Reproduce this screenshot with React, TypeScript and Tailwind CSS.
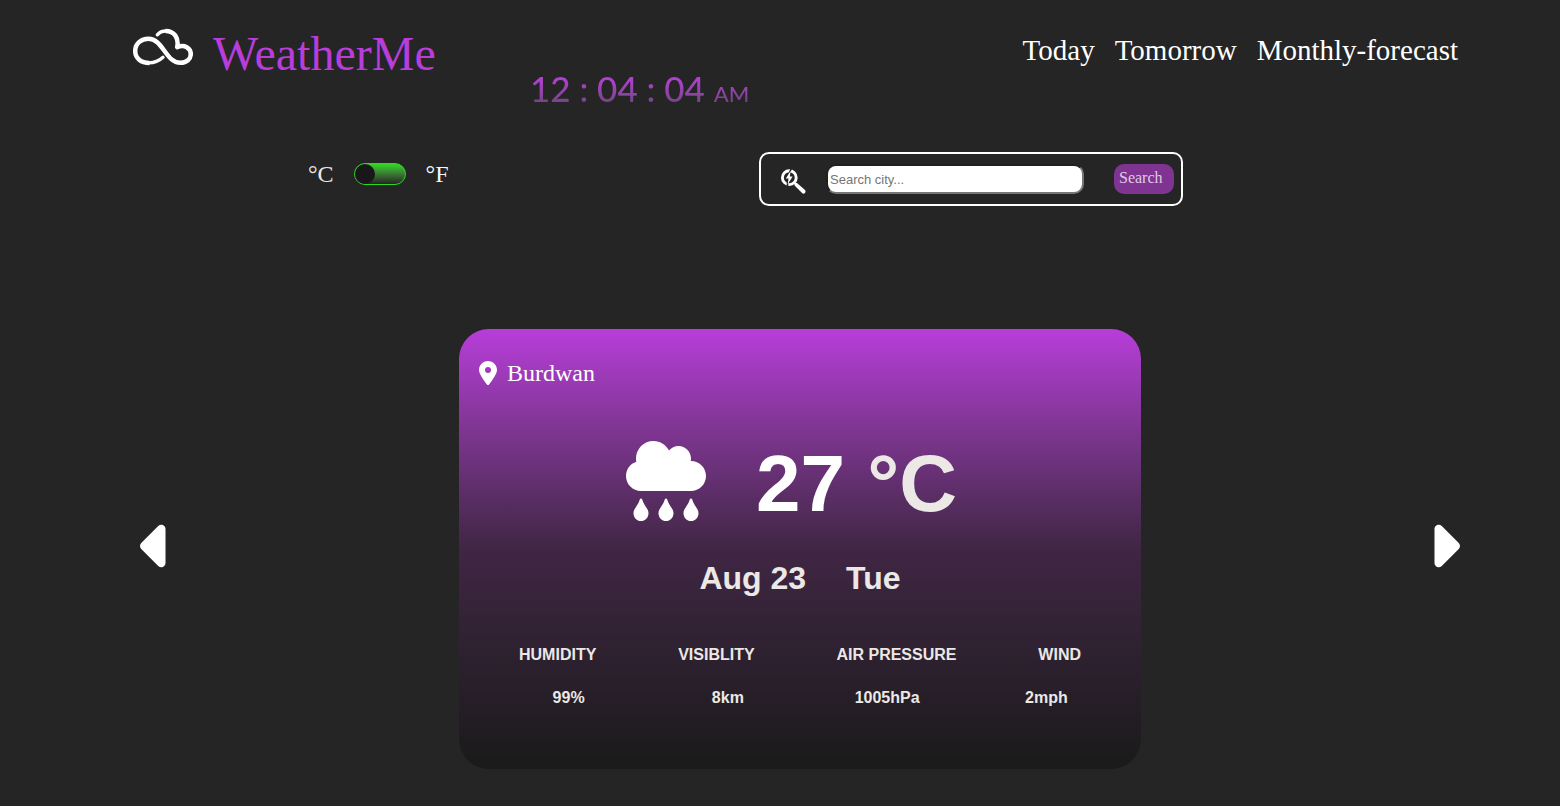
import React from "react";
import { FaCaretLeft, FaCaretRight, FaLocationDot } from "react-icons/fa6";
import { FaCloudRain } from "react-icons/fa";

const stats = [
  { label: "HUMIDITY", value: "99%" },
  { label: "VISIBLITY", value: "8km" },
  { label: "AIR PRESSURE", value: "1005hPa" },
  { label: "WIND", value: "2mph" },
];

function Logo() {
  return (
    <svg viewBox="0 0 60 38" className="h-[38px] w-[60px]" fill="none" stroke="#fff" strokeLinejoin="round" aria-hidden="true">
      <path strokeWidth="3.4" strokeLinecap="round" d="M30 29.300C25.500 33.500 20.500 34.900 16 34.900M24.300 6.800C26.500 4.200 29.500 3 33 3" />
      <path strokeWidth="4.500" d="M16.500 34.900C8 34.900 2.200 30.200 2.200 23C2.200 15.600 8 10.800 15.500 10.800C22.500 10.800 26.500 16 31 22.300C36 29.300 40 34.800 47.500 34.800C53.700 34.800 57.800 31 57.800 26C57.800 20 51.500 16.200 44.200 19.200C46 10 41.500 3 32.500 3" />
    </svg>
  );
}

function BoltSearchIcon() {
  return (
    <svg viewBox="0 0 26 26" className="size-[26px]" fill="none" aria-hidden="true">
      <circle cx="9.300" cy="9.700" r="6.900" stroke="#fff" strokeWidth="2.900" />
      <path d="M11.500 0 9 6M7.600 13 7.400 20" stroke="#252525" strokeWidth="1.600" />
      <path d="M10.700 2.800 5.800 10.600H8.600L7.600 16.600 12.600 8.600H9.800Z" fill="#fff" />
      <path d="M13.800 14.400 17 14.900 25 22C26.600 23.800 24.300 26.800 22.300 25.300L14.800 17.800Z" fill="#fff" />
    </svg>
  );
}

export default function App() {
  return (
    <div className="min-h-screen bg-[#252525] font-['Liberation_Serif',serif] text-white">
      <header className="flex items-start pr-[102px] pl-[133px]">
        <a href="#home" className="flex w-[397px] items-start">
          <span className="pt-7"><Logo /></span>
          <span className="pt-[26px] pl-5 text-5xl leading-[56px] text-[#b83dda]">WeatherMe</span>
        </a>
        <p className="mt-16 bg-linear-to-b from-[#b83dda] from-25% to-[#704580] to-85% bg-clip-text font-['Lato',sans-serif] text-[35px] leading-[48px] font-medium text-transparent">
          12 : 04 : 04 <span className="text-[22px] leading-none">AM</span>
        </p>
        <nav className="ml-auto flex gap-5 pt-[32px] text-[29px] leading-9">
          <a href="#today">Today</a>
          <a href="#tomorrow">Tomorrow</a>
          <a href="#monthly">Monthly-forecast</a>
        </nav>
      </header>

      <section className="mt-10 flex items-start justify-between pr-[377px] pl-[308px]">
        <div className="flex items-center gap-5 pt-2 text-2xl leading-7">
          <label htmlFor="unit" className="text-[#ebe8e6]">°C</label>
          <input
            id="unit"
            type="checkbox"
            role="switch"
            aria-label="Use Fahrenheit"
            className="flex h-[22px] w-[52px] appearance-none rounded-full border border-[#2fd81f] bg-linear-to-b from-[#2fd81f] to-[#252525] before:size-5 before:rounded-full before:bg-[#1a171a] checked:justify-end"
          />
          <label htmlFor="unit" className="text-[#f0f8ff]">°F</label>
        </div>
        <form className="flex h-[54px] w-[424px] items-center rounded-[10px] border-2 border-white pr-[7px] pl-[19px]" onSubmit={(e) => e.preventDefault()}>
          <span className="pt-1"><BoltSearchIcon /></span>
          <input
            type="text"
            aria-label="Search city"
            placeholder="Search city..."
            className="ml-5 h-[30px] w-[258px] rounded-[10px] border-2 border-t-[#202020] border-r-[#767676] border-b-[#767676] border-l-[#202020] bg-white pl-0.5 font-['Liberation_Sans',sans-serif] text-[13px] text-black placeholder:text-[#757575]"
          />
          <button type="submit" className="ml-auto flex h-[30px] w-[60px] items-start rounded-[10px] bg-[#7f3491] pl-[5px] text-base leading-7 text-[#e0c8e6]">
            Search
          </button>
        </form>
      </section>

      <main className="mt-[123px] flex items-center justify-between pr-[100px] pl-[140px]">
        <button type="button" aria-label="Previous day" className="mb-1.5"><FaCaretLeft className="h-[68px] w-[34px]" /></button>
        <article className="h-[440px] w-[682px] rounded-[30px] bg-linear-to-b from-[#b83dda] via-[#402644] to-[#1a1a1a]">
          <h2 className="flex items-center gap-2.5 pt-[30px] pl-5 text-2xl leading-7">
            <FaLocationDot className="h-6 w-[18px]" />
            Burdwan
          </h2>
          <div className="font-['Liberation_Sans',sans-serif] font-bold text-[#ebe8e6]">
            <div className="flex items-center pt-[45px] pl-[167px]">
              <FaCloudRain className="size-20 text-white" />
              <p className="pt-1.5 pl-[50px] text-[80px] leading-[92px]"><span className="text-white">27</span> °C</p>
            </div>
            <p className="flex justify-center gap-10 pt-[30px] text-[32px] leading-9"><span>Aug 23</span><span>Tue</span></p>
            <div className="flex justify-between px-[60px] pt-[49px] text-base leading-5">
              {stats.map((s) => (
                <span key={s.label}>{s.label}</span>
              ))}
            </div>
            <div className="grid grid-cols-4 pt-[23px] pr-[15px] pl-[30px] text-center text-base leading-5">
              {stats.map((s) => (
                <span key={s.label}>{s.value}</span>
              ))}
            </div>
          </div>
        </article>
        <button type="button" aria-label="Next day" className="mb-1.5"><FaCaretRight className="h-[68px] w-[34px]" /></button>
      </main>
    </div>
  );
}
